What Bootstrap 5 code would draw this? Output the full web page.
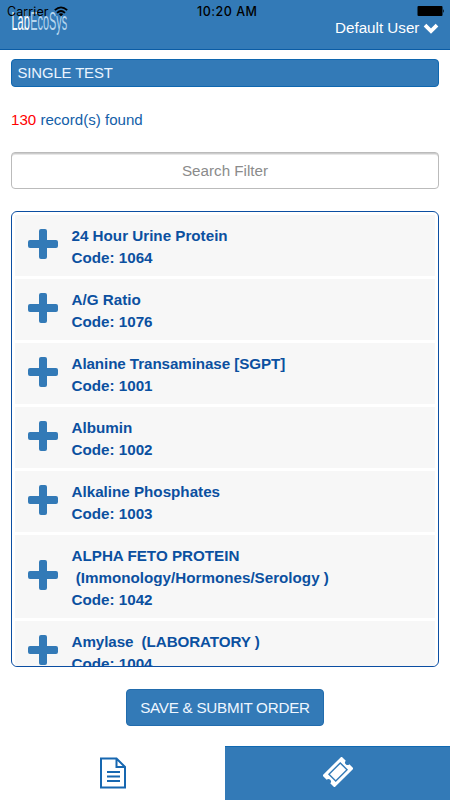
<!DOCTYPE html>
<html lang="en">
<head>
<meta charset="utf-8">
<meta name="viewport" content="width=device-width, initial-scale=1">
<title>LabEcoSys - Single Test</title>
<link href="https://cdn.jsdelivr.net/npm/bootstrap@5.3.0/dist/css/bootstrap.min.css" rel="stylesheet">
<style>
body{font-family:"Liberation Sans",Arial,sans-serif;font-size:15.2px;line-height:22px;color:#0b50a0;height:800px;overflow:hidden}
.brand-bg{background:#337ab7}
.app-header{height:50px;border-bottom:1px solid #0b5ca5}
.status-row{font:12.5px/22px Inter,sans-serif;color:#000;height:22px}
.status-time{left:197px;top:1px;font-weight:500;letter-spacing:.5px}
.status-carrier{left:7px;top:1px;letter-spacing:.1px}
.wifi{left:54px;top:6px}
.battery{left:417px;top:5px}
.brand-logo{left:11px;top:9px}
.user-menu{left:335px;top:17px;color:#fff}
.section-title{height:28px;border:1px solid #0f67b0;border-radius:4px;color:#eaf4ff;margin:9px 11px 0;padding:0 5.5px;font-size:14.9px;line-height:26px;letter-spacing:-.12px}
.records{margin:22px 11px 0;color:#1360a8;font-size:15.1px}
.records b{color:#f00;font-weight:400}
.filter-box{margin:21px 11px 0;height:37px;width:428px;border:1px solid #bbb;border-radius:4px;box-shadow:inset 0 1px 0 #ccc,inset 0 2px 0 #e7e7e7;font-size:15.2px;padding:0}
.filter-box::placeholder{color:#8b8b8b;opacity:1}
.test-list{margin:22px 11px 0;height:456px;border:1px solid #0b4ea2;border-radius:6px;padding:3px;gap:3px;overflow:hidden}
.test-item{background:#f7f7f7;padding:10px 13px 7px;gap:13.5px;font-weight:700;white-space:pre;flex:none}
.test-item svg{margin-bottom:6px}
.tight{letter-spacing:-.09px}
.btn-save{margin-top:22px;width:198px;height:37px;border:1px solid #226cad;border-radius:4px;color:#eef6ff;font-size:15.2px;padding:1px 0 0;letter-spacing:-.24px}
.tabs-bottom{margin-top:20px;height:54px}
.tab-on{border-top:1px solid #0f69b2}
</style>
<script src="https://cdn.jsdelivr.net/npm/bootstrap@5.3.0/dist/js/bootstrap.bundle.min.js"></script>
</head>
<body class="bg-white d-flex flex-column">
<svg class="d-none"><symbol id="plus" viewBox="0 0 30 30"><path fill="#337ab7" d="M13 0h4q2 0 2 2v9h9q2 0 2 2v4q0 2-2 2h-9v9q0 2-2 2h-4q-2 0-2-2v-9H2q-2 0-2-2v-4q0-2 2-2h9V2q0-2 2-2z"/></symbol></svg>
<header class="app-header brand-bg position-relative flex-shrink-0">
  <svg class="brand-logo position-absolute" width="60" height="30" fill="#fff" font-family="Liberation Sans">
    <g transform="scale(.52 1)"><text x="1" y="21" font-size="25" textLength="35" lengthAdjust="spacingAndGlyphs" fill="#fff">Lab</text><text x="37" y="21" font-size="25" textLength="71" lengthAdjust="spacingAndGlyphs" fill="#b5d5ee">EcoSys</text></g>
  </svg>
  <div class="status-row">
    <span class="status-carrier position-absolute">Carrier</span>
    <svg class="wifi position-absolute" width="14" height="11" fill="none" stroke="#000" stroke-width="1.8"><path d="M.8 4.2Q7-1.5 13.2 4.2M3 6.8Q7 3.2 11 6.8"/><path fill="#000" stroke="none" d="M4.7 8Q7 6.3 9.3 8L7 10.4z"/></svg>
    <span class="status-time position-absolute">10:20 AM</span>
    <svg class="battery position-absolute" width="28" height="12"><rect x=".5" y="1" width="25" height="10" rx="1"/><path d="M26 4q1.8 2 0 4z"/></svg>
  </div>
  <div class="user-menu position-absolute d-flex align-items-center text-nowrap"><span>Default User</span>
    <svg class="ms-1" width="16" height="11" fill="none" stroke="#fff" stroke-width="3.8"><path d="M2 2.2 8 8l6-5.8"/></svg></div>
</header>
<h1 class="section-title brand-bg fw-normal flex-shrink-0 mb-0">SINGLE TEST</h1>
<div class="records"><b>130</b> record(s) found</div>
<input class="filter-box form-control text-center flex-shrink-0" type="text" placeholder="Search Filter" aria-label="Search Filter">
<main class="test-list d-flex flex-column flex-shrink-0">
  <div class="test-item d-flex align-items-center"><svg width="30" height="30"><use href="#plus"/></svg><div>24 Hour Urine Protein<br>Code: 1064</div></div>
  <div class="test-item d-flex align-items-center"><svg width="30" height="30"><use href="#plus"/></svg><div>A/G Ratio<br>Code: 1076</div></div>
  <div class="test-item d-flex align-items-center"><svg width="30" height="30"><use href="#plus"/></svg><div><span class="tight">Alanine Transaminase [SGPT]</span><br>Code: 1001</div></div>
  <div class="test-item d-flex align-items-center"><svg width="30" height="30"><use href="#plus"/></svg><div>Albumin<br>Code: 1002</div></div>
  <div class="test-item d-flex align-items-center"><svg width="30" height="30"><use href="#plus"/></svg><div>Alkaline Phosphates<br>Code: 1003</div></div>
  <div class="test-item d-flex align-items-center"><svg width="30" height="30"><use href="#plus"/></svg><div>ALPHA FETO PROTEIN<br> (Immonology/Hormones/Serology )<br>Code: 1042</div></div>
  <div class="test-item d-flex align-items-center"><svg width="30" height="30"><use href="#plus"/></svg><div><span class="tight">Amylase  (LABORATORY )</span><br>Code: 1004</div></div>
</main>
<button class="btn btn-save brand-bg align-self-center flex-shrink-0">SAVE &amp; SUBMIT ORDER</button>
<nav class="tabs-bottom d-flex flex-shrink-0">
  <a class="w-50 d-flex align-items-center justify-content-center" href="#" aria-label="Report"><svg width="26" height="32" fill="none" stroke="#1767b0" stroke-width="2"><path d="M1 1.5h15.5L25 10v20.5H1zM16.5 1.5V10H25M7 15h13M7 19.5h13M7 24h13"/></svg></a>
  <a class="tab-on brand-bg w-50 d-flex align-items-center justify-content-center" href="#" aria-label="Tests"><svg class="mb-1" width="30" height="30" viewBox="0 0 30 30"><g transform="rotate(-45 15 15)"><path fill="#fff" d="M2.5 6.5h25q1 0 1 1v5a2.5 2.5 0 0 0 0 5v5q0 1-1 1h-25q-1 0-1-1v-5a2.5 2.5 0 0 0 0-5v-5q0-1 1-1z"/><rect x="7" y="10.2" width="16" height="9.6" fill="none" stroke="#337ab7" stroke-width="1.4"/></g></svg></a>
</nav>
</body>
</html>
